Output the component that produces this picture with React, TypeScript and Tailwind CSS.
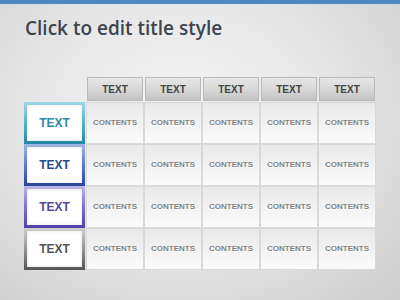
import React from "react";

const labels = [
  { frame: "bg-gradient-to-b from-[#9ed6e6] via-[#56b2c9] to-[#23879f]", text: "text-[#2d8ca4]" },
  { frame: "bg-gradient-to-b from-[#a3b6e2] via-[#5d7cc2] to-[#2a4797]", text: "text-[#2b4a94]" },
  { frame: "bg-gradient-to-b from-[#beb6e8] via-[#8070ca] to-[#5140a6]", text: "text-[#59499c]" },
  { frame: "bg-gradient-to-b from-[#cfcfcf] via-[#959595] to-[#555555]", text: "text-[#555555]" },
];

export default function App() {
  return (
    <div className="w-[400px] h-[300px] overflow-hidden flex flex-col bg-[radial-gradient(ellipse_at_45%_40%,#f5f5f5_0%,#e8e8e8_45%,#cdcdcd_100%)] [font-family:'Liberation_Sans',Arial,sans-serif]">
      <div className="h-[4px] bg-[#4d88c3] shrink-0" />
      <div className="pl-[25px] pt-[11px] h-[73px] shrink-0">
        <div className="text-[19px] leading-[26px] font-semibold text-[#3d4450] [font-family:'Open_Sans',sans-serif]">
          Click to edit title style
        </div>
      </div>
      <div className="pl-[24px] grid grid-cols-[61px_repeat(5,56px)] grid-rows-[24px_repeat(4,40px)] gap-[2px]">
        <div />
        {[0, 1, 2, 3, 4].map((i) => (
          <div
            key={i}
            className="border border-[#b9b9b9] bg-gradient-to-b from-[#e6e6e6] via-[#d8d8d8] to-[#c4c4c4] flex items-center justify-center text-[10px] font-bold text-[#454545]"
          >
            TEXT
          </div>
        ))}
        {labels.map((l, r) => (
          <React.Fragment key={r}>
            <div className={`-my-[1px] p-[3px] ${l.frame}`}>
              <div className={`w-full h-full bg-white shadow-[inset_0_0_3px_rgba(0,0,0,0.15)] flex items-center justify-center text-[12px] font-bold ${l.text}`}>
                TEXT
              </div>
            </div>
            {[0, 1, 2, 3, 4].map((c) => (
              <div
                key={c}
                className="shadow-[0_0_0_1px_#d9d9d9] bg-gradient-to-b from-[#e9e9e9] to-[#fbfbfb] flex items-center justify-center text-[8px] font-bold text-[#828282] [text-shadow:0_1px_0_#ffffff]"
              >
                CONTENTS
              </div>
            ))}
          </React.Fragment>
        ))}
      </div>
    </div>
  );
}
